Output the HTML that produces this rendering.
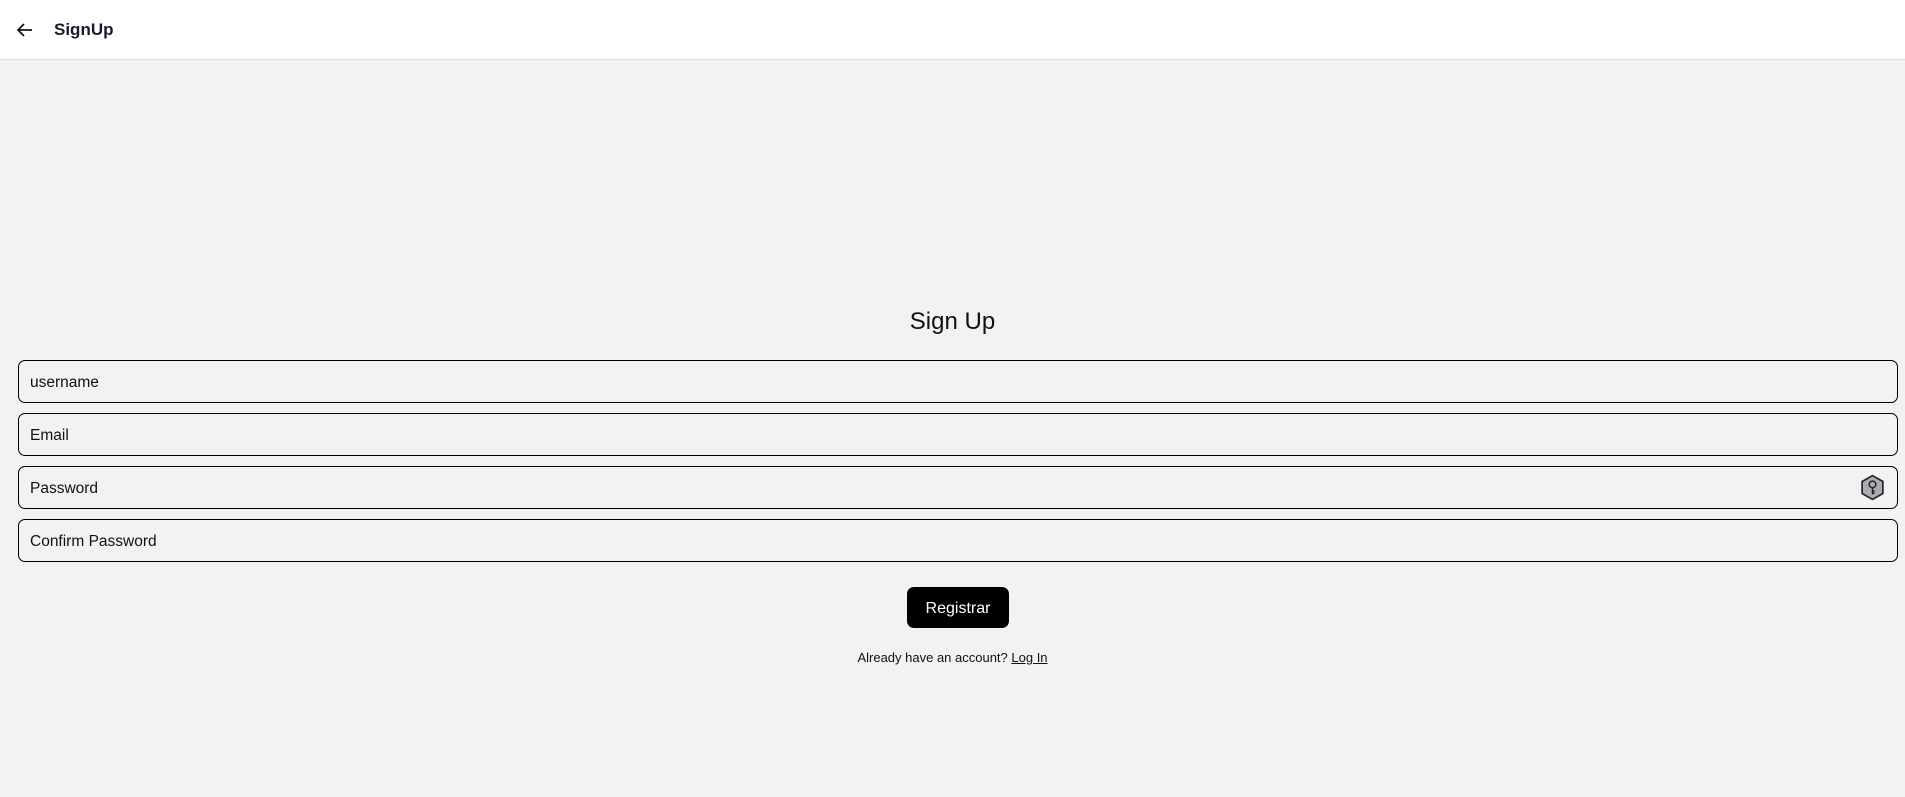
<!DOCTYPE html>
<html><head><meta charset="utf-8"><style>
*{box-sizing:border-box;margin:0;padding:0}
html,body{width:1905px;height:797px;overflow:hidden;background:#f2f2f2;font-family:"Segoe UI","Liberation Sans",sans-serif;color:#111}
.hdr{position:absolute;left:0;top:0;width:1905px;height:60px;background:#fff;border-bottom:1px solid #dcdcdc}
.hdr svg{position:absolute;left:15px;top:20px}
.hdr .t{position:absolute;left:54px;top:20px;font-size:17px;font-weight:600;color:#1a1a2e}
h1{position:absolute;left:0;width:1905px;top:308px;text-align:center;font-size:24px;font-weight:400}
.in{position:absolute;left:18px;width:1880px;height:43px;border:1.5px solid #000;border-radius:7px;font-size:15.5px;padding-left:11px;line-height:43px}
.btn{position:absolute;left:907px;top:587px;width:102px;height:41px;background:#000;color:#fff;border-radius:7px;font-size:16px;text-align:center;line-height:43px}
.lk{position:absolute;left:0;width:1905px;top:650px;text-align:center;font-size:13px}
.lk u{text-decoration:underline}
</style></head><body>
<div class="hdr"><svg width="20" height="20" viewBox="0 0 20 20"><path d="M17 10H3M9 4L3 10L9 16" stroke="#111" stroke-width="1.8" fill="none"/></svg><span class="t">SignUp</span></div>
<h1>Sign Up</h1>
<div class="in" style="top:360px">username</div>
<div class="in" style="top:413px">Email</div>
<div class="in" style="top:466px">Password
<svg style="position:absolute;right:12px;top:7px" width="25" height="27" viewBox="0 0 24 26"><path d="M12 1.5L22 7.2V18.8L12 24.5L2 18.8V7.2Z" fill="#a9acb1" stroke="#222" stroke-width="1.6" stroke-linejoin="round"/><circle cx="12" cy="10" r="3.2" fill="none" stroke="#222" stroke-width="1.4"/><path d="M12 13.2V19.5M12 16.5H14M12 18.5H14" stroke="#222" stroke-width="1.4" fill="none"/></svg></div>
<div class="in" style="top:519px">Confirm Password</div>
<div class="btn">Registrar</div>
<div class="lk">Already have an account? <u>Log In</u></div>
</body></html>
